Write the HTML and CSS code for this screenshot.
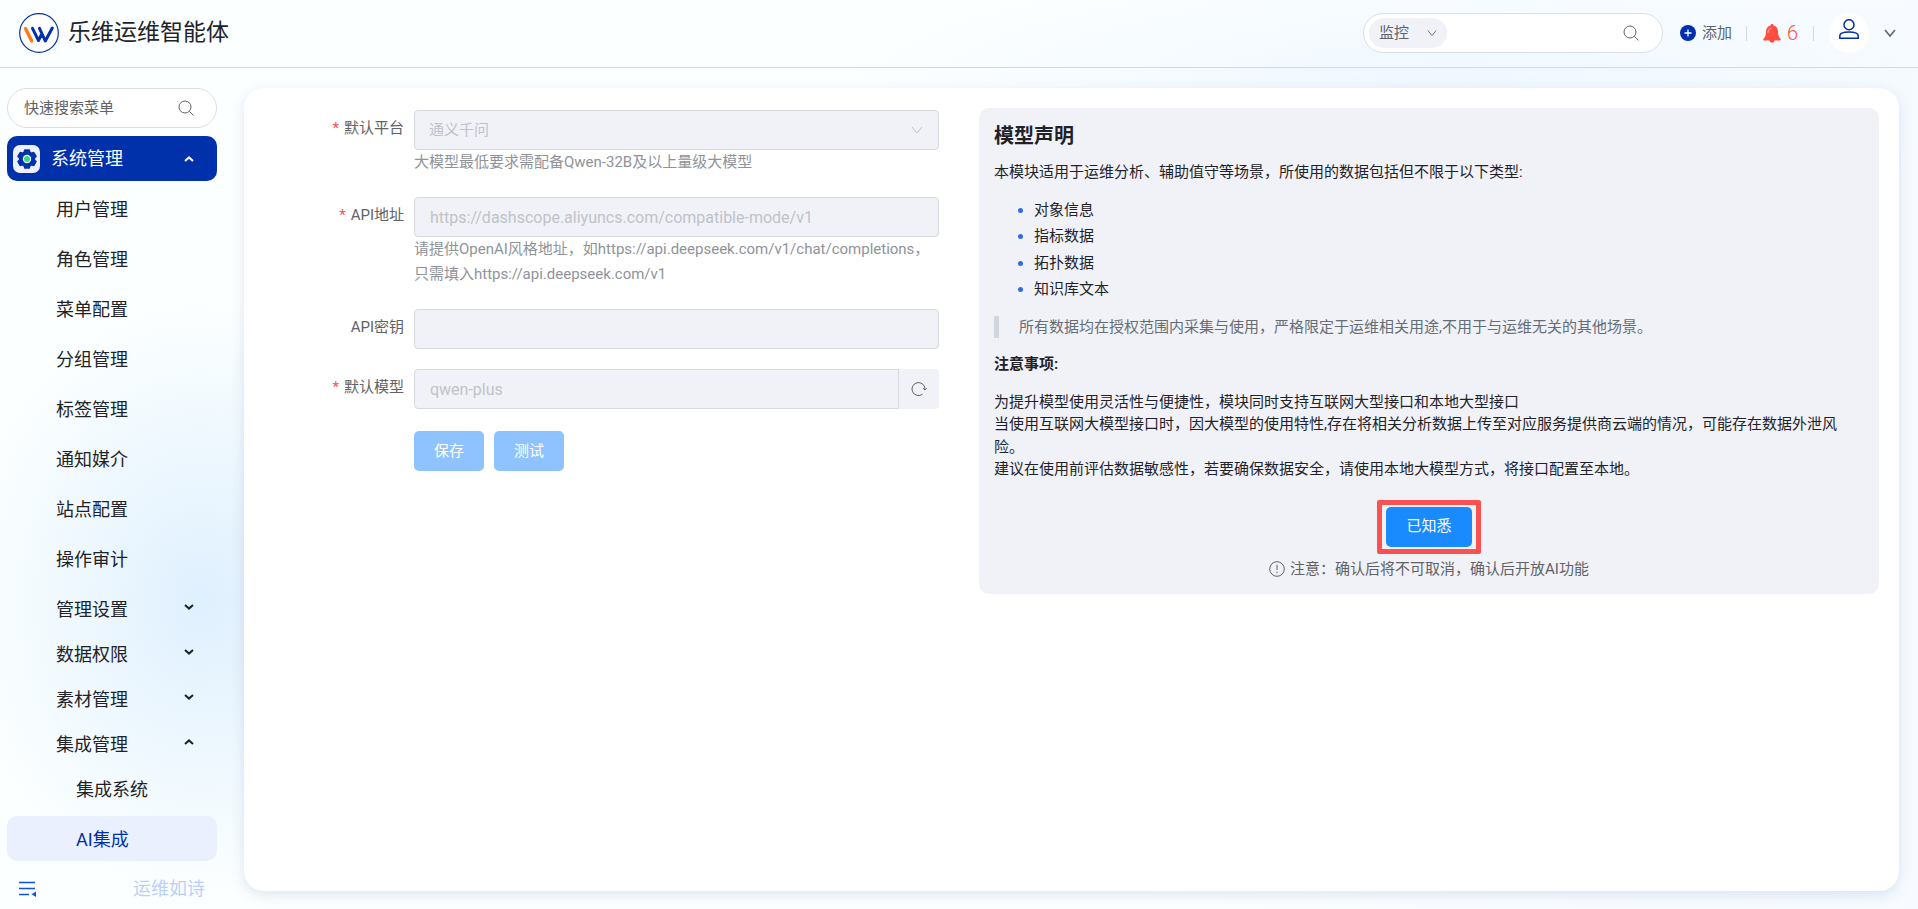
FILE: index.html
```html
<!DOCTYPE html>
<html lang="zh-CN">
<head>
<meta charset="utf-8">
<title>乐维运维智能体</title>
<link rel="stylesheet" href="styles.css">
</head>
<body>
<svg class="sprite" width="0" height="0" aria-hidden="true">
  <symbol id="i-search" viewBox="0 0 16 16"><circle cx="7" cy="7" r="6"/><path d="M11.3 11.3 15.4 15.4"/></symbol>
  <symbol id="i-chev" viewBox="0 0 12 12"><path d="M1 3 6 9 11 3"/></symbol>
  <symbol id="i-down" viewBox="0 0 10 6"><path d="M1 1 5 4.6 9 1"/></symbol>
  <symbol id="i-up" viewBox="0 0 10 6"><path d="M1 5 5 1.4 9 5"/></symbol>
</svg>
<header class="topbar">
  <div class="brand">
    <svg class="brand-logo" viewBox="0 0 40 40" aria-hidden="true">
      <circle cx="20" cy="20" r="19.3" fill="#fff" stroke="#0130ab" stroke-width="1.2"/>
      <path d="M6.500 15.500 12.700 28" stroke="#ff7a14" stroke-width="3.400" stroke-linecap="round"/>
      <path d="M13.500 15.300 19.500 27.500 23 20.500 M20.500 15.300 26.300 28 33.300 15" fill="none" stroke="#0130ab" stroke-width="3" stroke-linecap="round" stroke-linejoin="round"/>
    </svg>
    <h1 class="brand-name">乐维运维智能体</h1>
  </div>
  <div class="tools">
    <div class="global-search">
      <button class="scope" type="button">监控<svg class="ico scope-ico"><use href="#i-chev"/></svg></button>
      <input class="global-input" type="text" aria-label="搜索">
      <svg class="ico search-ico"><use href="#i-search"/></svg>
    </div>
    <button class="add" type="button">
      <svg class="add-ico" viewBox="0 0 16 16" aria-hidden="true"><circle cx="8" cy="8" r="8" fill="#0130ab"/><path d="M8 4.500v7M4.500 8h7" stroke="#fff" stroke-width="1.300"/></svg>添加
    </button>
    <span class="divider"></span>
    <button class="alarm" type="button" aria-label="告警">
      <svg class="bell" viewBox="0 0 18 19" aria-hidden="true"><path fill="#ff4d3f" d="M9 0c.9 0 1.500.6 1.500 1.500 3 .8 4.500 3.100 4.500 6 0 4 .8 5.500 2.500 7.200.6.700.3 1.800-.7 1.800h-5.400c0 1.300-1 2.200-2.400 2.200s-2.400-.9-2.400-2.200H1.200c-1 0-1.300-1.100-.7-1.800C2.200 13 3 11.500 3 7.500c0-2.900 1.500-5.200 4.500-6C7.500.6 8.100 0 9 0z"/><path d="M5 8.500C5 6 6 4.700 8 4.200" fill="none" stroke="#ffb0a8" stroke-linecap="round"/></svg>6
    </button>
    <span class="divider"></span>
    <button class="user" type="button" aria-label="用户">
      <svg class="user-ico" viewBox="0 0 20 20" fill="none" stroke="#0130ab" stroke-width="1.500" aria-hidden="true"><ellipse cx="10" cy="5.700" rx="5" ry="5"/><path d="M.8 19.200v-2.400c0-2.600 4-3.800 9.200-3.800s9.200 1.200 9.200 3.800v2.400z"/></svg>
    </button>
    <svg class="ico user-chev"><use href="#i-chev"/></svg>
  </div>
</header>
<div class="body">
  <aside class="sidebar">
    <div class="menu-search">
      <input class="menu-input" type="text" placeholder="快速搜索菜单" aria-label="快速搜索菜单">
      <svg class="ico search-ico"><use href="#i-search"/></svg>
    </div>
    <nav class="menu">
      <a class="item root" href="#"><span class="root-ico"><svg class="gear" viewBox="0 0 20 20" aria-hidden="true"><path fill="#0130ab" stroke="#0130ab" stroke-width="1.500" stroke-linejoin="round" d="M7.800 1h4.400l.7 2.300 1.600.9 2.300-.6 2.200 3.800-1.600 1.700v1.800l1.600 1.700-2.200 3.800-2.300-.6-1.600.9-.7 2.300H7.800l-.7-2.300-1.600-.9-2.300.6L1 12.600l1.600-1.700V9.100L1 7.400l2.200-3.800 2.300.6 1.600-.9z"/><circle cx="10" cy="10" r="4.200" fill="#fff"/><circle cx="10" cy="10" r="3" fill="#2fdc82"/></svg></span><span class="label">系统管理</span><svg class="ico fold"><use href="#i-up"/></svg></a>
      <a class="item leaf" href="#">用户管理</a>
      <a class="item leaf" href="#">角色管理</a>
      <a class="item leaf" href="#">菜单配置</a>
      <a class="item leaf" href="#">分组管理</a>
      <a class="item leaf" href="#">标签管理</a>
      <a class="item leaf" href="#">通知媒介</a>
      <a class="item leaf" href="#">站点配置</a>
      <a class="item leaf" href="#">操作审计</a>
      <a class="item group-item" href="#"><span class="label">管理设置</span><svg class="ico fold"><use href="#i-down"/></svg></a>
      <a class="item group-item" href="#"><span class="label">数据权限</span><svg class="ico fold"><use href="#i-down"/></svg></a>
      <a class="item group-item" href="#"><span class="label">素材管理</span><svg class="ico fold"><use href="#i-down"/></svg></a>
      <a class="item group-item" href="#"><span class="label">集成管理</span><svg class="ico fold"><use href="#i-up"/></svg></a>
      <a class="item leaf sub" href="#">集成系统</a>
      <a class="item leaf sub current" href="#">AI集成</a>
    </nav>
    <div class="side-foot">
      <button class="collapse" type="button" aria-label="收起菜单"><svg class="collapse-ico" viewBox="0 0 18 16" aria-hidden="true"><path d="M0 1.500h16M0 7.500h16M0 13.500h10" stroke="#1450e0" stroke-width="1.600"/><path d="M17 10.500v5.500l-4.500-2.700z" fill="#1450e0"/></svg></button>
      <span class="slogan">运维如诗</span>
    </div>
  </aside>
  <main class="card">
    <form class="form">
      <label class="form-label required" for="platform">默认平台</label>
      <div class="field">
        <div class="select-wrap">
          <select class="control" id="platform" disabled><option>通义千问</option></select>
          <svg class="ico select-ico"><use href="#i-chev"/></svg>
        </div>
        <p class="hint">大模型最低要求需配备Qwen-32B及以上量级大模型</p>
      </div>
      <label class="form-label required" for="url">API地址</label>
      <div class="field">
        <input class="control" id="url" type="text" value="https://dashscope.aliyuncs.com/compatible-mode/v1" disabled>
        <p class="hint">请提供OpenAI风格地址，如https://api.deepseek.com/v1/chat/completions，只需填入https://api.deepseek.com/v1</p>
      </div>
      <label class="form-label" for="key">API密钥</label>
      <div class="field"><input class="control" id="key" type="text" disabled></div>
      <label class="form-label required" for="model">默认模型</label>
      <div class="field group">
        <input class="control" id="model" type="text" value="qwen-plus" disabled>
        <button class="refresh" type="button" aria-label="刷新"><svg class="refresh-ico" viewBox="0 0 16 16" fill="none" stroke="#606266" aria-hidden="true"><path d="M14 8.500V8A6.500 6.500 0 1 0 11.500 13.200"/><path d="M12 7.300 14 9 15.800 7.300"/></svg></button>
      </div>
      <div class="actions">
        <button class="btn" type="button" disabled>保存</button>
        <button class="btn" type="button" disabled>测试</button>
      </div>
    </form>
    <section class="notice">
      <h2 class="notice-title">模型声明</h2>
      <p class="para">本模块适用于运维分析、辅助值守等场景，所使用的数据包括但不限于以下类型:</p>
      <ul class="types">
        <li>对象信息</li>
        <li>指标数据</li>
        <li>拓扑数据</li>
        <li>知识库文本</li>
      </ul>
      <blockquote class="quote">所有数据均在授权范围内采集与使用，严格限定于运维相关用途,不用于与运维无关的其他场景。</blockquote>
      <p class="para"><strong>注意事项:</strong></p>
      <p class="para">为提升模型使用灵活性与便捷性，模块同时支持互联网大型接口和本地大型接口<br>当使用互联网大模型接口时，因大模型的使用特性,存在将相关分析数据上传至对应服务提供商云端的情况，可能存在数据外泄风险。<br>建议在使用前评估数据敏感性，若要确保数据安全，请使用本地大模型方式，将接口配置至本地。</p>
      <div class="confirm">
        <div class="mark"><button class="btn primary" type="button">已知悉</button></div>
        <p class="tip"><svg class="tip-ico" viewBox="0 0 16 16" fill="none" stroke="#606266" aria-hidden="true"><circle cx="8" cy="8" r="7.300"/><path d="M8 3.800v5.200M8 10.600v1.600"/></svg>注意：确认后将不可取消，确认后开放AI功能</p>
      </div>
    </section>
  </main>
</div>
</body>
</html>
```

FILE: styles.css
```css
* { box-sizing: border-box; }
body {
  margin: 0;
  min-height: 100vh;
  display: flex;
  flex-direction: column;
  font-family: Roboto, "Noto Sans CJK SC", sans-serif;
  font-size: 15px;
  line-height: 1.5;
  color: #1f2329;
  background:
    radial-gradient(ellipse 240px 300px at 200px 600px, #dff0fe, rgba(223, 240, 254, 0)),
    radial-gradient(ellipse 600px 130px at 75% 90px, #eff7ff, rgba(239, 247, 255, 0)),
    linear-gradient(90deg, #fcffff 60%, #f7fbff);
}
h1, h2, p, ul, blockquote { margin: 0; font-weight: 400; }
button, input, select { font: inherit; color: inherit; border: 0; padding: 0; background: none; outline: none; }
.ico { fill: none; stroke: currentColor; flex: none; }
.sprite { position: absolute; }

.topbar {
  height: 68px;
  display: flex;
  align-items: center;
  justify-content: space-between;
  padding: 0 22px 1px 19px;
  border-bottom: 1px solid #d3dadd;
}
.brand { display: flex; align-items: center; gap: 9px; }
.brand-logo { width: 40px; height: 40px; }
.brand-name { font-size: 23px; line-height: 32px; }
.tools { display: flex; align-items: center; color: #606266; }
.global-search {
  width: 300px;
  height: 40px;
  display: flex;
  align-items: center;
  padding: 0 23px 0 5px;
  border: 1px solid #dcdfe2;
  border-radius: 20px;
  background: #fff;
}
.scope {
  display: flex;
  align-items: center;
  gap: 18px;
  height: 30px;
  padding: 0 10px;
  border-radius: 15px;
  background: #f1f2f8;
}
.scope-ico { width: 10px; height: 10px; }
.global-input { flex: 1; min-width: 0; }
.search-ico { width: 16px; height: 16px; }
.add { display: flex; align-items: center; gap: 6px; margin: 0 14px 0 17px; }
.add-ico { width: 16px; height: 16px; }
.divider { width: 1px; height: 15px; background: #d4d7dc; }
.alarm {
  display: flex;
  align-items: center;
  gap: 6px;
  margin: 0 15px 0 16px;
  font-size: 20px;
  font-weight: 300;
  line-height: 24px;
  color: #ff4d3f;
}
.bell { width: 18px; height: 19px; }
.user {
  width: 40px;
  height: 40px;
  margin: 0 15px;
  display: flex;
  justify-content: center;
  padding-top: 6px;
  border-radius: 50%;
  background: #fff;
}
.user-ico { width: 20px; height: 20px; }
.user-chev { width: 12px; height: 12px; stroke-width: 1.5; }

.body { flex: 1; display: flex; gap: 27px; padding: 20px 19px 6px 7px; }
.sidebar { width: 210px; flex: none; display: flex; flex-direction: column; }
.menu-search {
  height: 40px;
  display: flex;
  align-items: center;
  padding: 0 22px 0 16px;
  border: 1px solid #dcdfe2;
  border-radius: 20px;
  background: #fff;
  color: #606266;
}
.menu-input { flex: 1; min-width: 0; }
.menu-input::placeholder { color: #606266; opacity: 1; }
.menu { display: flex; flex-direction: column; margin-top: 8px; }
.item {
  height: 45px;
  display: flex;
  align-items: center;
  justify-content: space-between;
  padding: 2px 23px 0 49px;
  border-radius: 10px;
  font-size: 18px;
  color: #1f2329;
  text-decoration: none;
}
.leaf { margin-bottom: 5px; }
.fold { width: 10px; height: 6px; stroke-width: 2; }
.group-item .fold { margin-bottom: 6px; }
.root { justify-content: flex-start; gap: 11px; padding: 0 23px 0 6px; margin-bottom: 5px; background: #0130ab; color: #fff; }
.root .label { flex: 1; }
.root-ico { width: 27px; height: 28px; display: flex; align-items: center; justify-content: center; border-radius: 7px; background: #eef1fd; }
.gear { width: 20px; height: 20px; }
.sub { padding-left: 69px; }
.current { background: #ebf0fe; color: #0130ab; }
.side-foot { display: flex; align-items: center; justify-content: space-between; padding: 9px 12px 0; }
.collapse { display: flex; }
.collapse-ico { width: 18px; height: 16px; }
.slogan { font-size: 18px; color: #bccff8; }

.card {
  flex: 1;
  min-width: 0;
  display: grid;
  grid-template-columns: 625fr 900fr;
  align-items: start;
  gap: 40px;
  margin-bottom: 12px;
  padding: 20px 20px 20px 70px;
  border-radius: 20px;
  background: #fff;
  box-shadow: 0 4px 14px rgba(60, 100, 150, 0.16);
}
.form {
  min-width: 0;
  display: grid;
  grid-template-columns: 90px 1fr;
  gap: 20px 10px;
  padding-top: 2px;
}
.form-label { line-height: 36px; text-align: right; color: #606266; white-space: nowrap; }
.required::before { content: "*"; margin-right: 5px; color: #ff4d4f; }
.select-wrap { display: grid; align-items: center; }
.select-wrap > * { grid-area: 1 / 1; }
.select-ico { width: 12px; height: 12px; margin-right: 16px; justify-self: end; color: #c0c4cc; }
.control {
  width: 100%;
  height: 40px;
  padding: 0 15px;
  border: 1px solid #d6d9de;
  border-radius: 4px;
  background: #f1f2f8;
  color: #bfc2c8;
  font-size: 16px;
  opacity: 1;
  appearance: none;
}
select.control { padding: 0 14px; font-size: 15px; }
.hint { line-height: 25px; padding-bottom: 2px; color: #8f9399; }
.group { display: flex; }
.group .control { flex: 1; min-width: 0; border-radius: 4px 0 0 4px; }
.refresh { width: 40px; height: 40px; display: flex; align-items: center; justify-content: center; border-radius: 0 4px 4px 0; background: #f1f2f8; }
.refresh-ico { width: 16px; height: 16px; }
.actions { grid-column: 2; display: flex; gap: 10px; padding-top: 2px; }
.btn { height: 40px; padding: 0 20px; border-radius: 5px; background: #8ec3ff; color: #fff; }
.primary { background: #1a8aff; }

.notice {
  min-width: 0;
  display: flex;
  flex-direction: column;
  gap: 15px;
  padding: 12px 15px 14px;
  border-radius: 10px;
  background: #f1f2f8;
}
.notice-title { font-size: 20px; line-height: 32px; font-weight: 700; margin-bottom: -6px; }
.types { display: grid; gap: 4px; padding-left: 40px; }
.types li::marker { color: #2f6be6; }
.quote { padding-left: 20px; border-left: 5px solid #d0d7de; color: #656d76; }
.confirm { display: flex; flex-direction: column; align-items: center; gap: 4px; margin-top: 4px; }
.mark { padding: 2px 4px; border: 5px solid #fb5151; border-radius: 2px; display: flex; }
.tip { display: flex; align-items: center; gap: 5px; color: #606266; }
.tip-ico { width: 16px; height: 16px; }
```
